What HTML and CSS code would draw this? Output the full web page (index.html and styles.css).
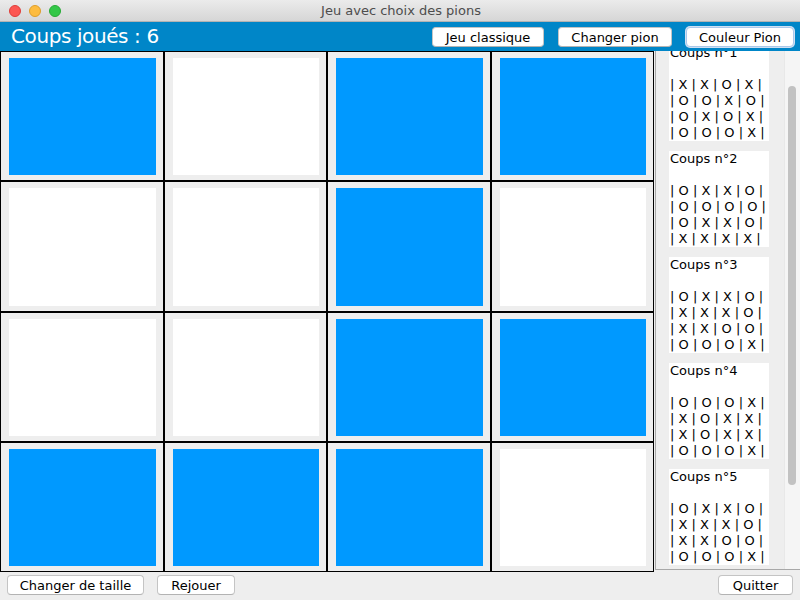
FILE: index.html
```html
<!DOCTYPE html>
<html lang="fr">
<head>
<meta charset="utf-8">
<title>Jeu avec choix des pions</title>
<link rel="stylesheet" href="styles.css">
</head>
<body>
<div class="window">
  <div class="titlebar">
    <div class="lights">
      <span class="light red"></span>
      <span class="light yellow"></span>
      <span class="light green"></span>
    </div>
    <div class="title">Jeu avec choix des pions</div>
  </div>
  <div class="header">
    <div class="score">Coups joués : 6</div>
    <div class="header-buttons">
      <button class="btn btn-classic">Jeu classique</button>
      <button class="btn btn-pion">Changer pion</button>
      <button class="btn btn-color focused">Couleur Pion</button>
    </div>
  </div>
  <div class="main">
    <div class="board">
      <div class="cell"><div class="pawn blue"></div></div>
      <div class="cell"><div class="pawn white"></div></div>
      <div class="cell"><div class="pawn blue"></div></div>
      <div class="cell"><div class="pawn blue"></div></div>
      <div class="cell"><div class="pawn white"></div></div>
      <div class="cell"><div class="pawn white"></div></div>
      <div class="cell"><div class="pawn blue"></div></div>
      <div class="cell"><div class="pawn white"></div></div>
      <div class="cell"><div class="pawn white"></div></div>
      <div class="cell"><div class="pawn white"></div></div>
      <div class="cell"><div class="pawn blue"></div></div>
      <div class="cell"><div class="pawn blue"></div></div>
      <div class="cell"><div class="pawn blue"></div></div>
      <div class="cell"><div class="pawn blue"></div></div>
      <div class="cell"><div class="pawn blue"></div></div>
      <div class="cell"><div class="pawn white"></div></div>
    </div>
    <div class="side">
      <div class="scrollpane">
        <div class="history">
<div class="card">Coups n°1

| X | X | O | X |
| O | O | X | O |
| O | X | O | X |
| O | O | O | X |</div>
<div class="card">Coups n°2

| O | X | X | O |
| O | O | O | O |
| O | X | X | O |
| X | X | X | X |</div>
<div class="card">Coups n°3

| O | X | X | O |
| X | X | X | O |
| X | X | O | O |
| O | O | O | X |</div>
<div class="card">Coups n°4

| O | O | O | X |
| X | O | X | X |
| X | O | X | X |
| O | O | O | X |</div>
<div class="card">Coups n°5

| O | X | X | O |
| X | X | X | O |
| X | X | O | O |
| O | O | O | X |</div>
        </div>
        <div class="scrollbar"><div class="thumb"></div></div>
      </div>
    </div>
  </div>
  <div class="footer">
    <button class="btn btn-size">Changer de taille</button>
    <button class="btn btn-replay">Rejouer</button>
    <div class="spacer"></div>
    <button class="btn btn-quit">Quitter</button>
  </div>
</div>
</body>
</html>
```

FILE: styles.css
```css
* { box-sizing: border-box; }
html, body { margin: 0; padding: 0; }
body {
  font-family: "DejaVu Sans", "Liberation Sans", sans-serif;
  background: #eeeeee;
}
.window {
  width: 800px;
  height: 600px;
  display: flex;
  flex-direction: column;
  overflow: hidden;
  background: #eeeeee;
}
.titlebar {
  height: 22px;
  flex: none;
  background: linear-gradient(#ebebeb, #d6d6d6);
  border-bottom: 1px solid #b3b3b3;
  position: relative;
  display: flex;
  align-items: center;
  justify-content: center;
}
.lights {
  position: absolute;
  left: 9px;
  top: 5px;
  display: flex;
  gap: 8px;
}
.light {
  width: 12px;
  height: 12px;
  border-radius: 50%;
  display: block;
}
.red { background: #fc5753; border: 1px solid #df3d39; }
.yellow { background: #fdbc40; border: 1px solid #de9e2a; }
.green { background: #33c748; border: 1px solid #27aa35; }
.title {
  font-size: 13px;
  color: #4d4d4d;
  padding-left: 2px;
}
.header {
  height: 29px;
  flex: none;
  background: #0086c8;
  display: flex;
  align-items: flex-start;
  justify-content: space-between;
  padding: 0 6px 0 11px;
}
.score {
  color: #ffffff;
  font-size: 20px;
  line-height: 29px;
  letter-spacing: -0.4px;
}
.header-buttons {
  display: flex;
  gap: 14px;
  padding-top: 5px;
}
.btn {
  font-family: "DejaVu Sans", "Liberation Sans", sans-serif;
  font-size: 13px;
  color: #000;
  background: #ffffff;
  border: 1px solid #c4c4c4;
  border-bottom-color: #b3b3b3;
  border-radius: 4px;
  height: 20px;
  padding: 0;
  line-height: 17px;
}
.btn-classic { width: 112px; }
.btn-pion { width: 114px; }
.btn-color { width: 108px; }
.focused { border-color: #a9c8ea; box-shadow: 0 0 0 1px #cfe0f3; }
.main {
  height: 521px;
  flex: none;
  display: flex;
}
.board {
  width: 654px;
  height: 521px;
  flex: none;
  display: grid;
  grid-template-columns: repeat(4, 1fr);
  grid-template-rows: repeat(4, 1fr);
}
.cell {
  border: 1px solid #000;
  background: #eeeeee;
  padding: 6px 7px 5px 8px;
  display: flex;
}
.pawn { flex: 1; }
.pawn.blue { background: #0099ff; }
.pawn.white { background: #ffffff; }
.side {
  flex: 1;
  height: 520px;
  padding-left: 1px;
}
.scrollpane {
  height: 519px;
  border-left: 1px solid #a8a8a8;
  border-bottom: 1px solid #a8a8a8;
  display: flex;
  overflow: hidden;
}
.history {
  flex: 1;
  padding-left: 13px;
  margin-top: -6px;
  display: flex;
  flex-direction: column;
  gap: 10px;
}
.card {
  width: 100px;
  height: 96px;
  flex: none;
  background: #ffffff;
  white-space: pre;
  font-size: 13px;
  line-height: 16px;
  color: #000;
  padding-left: 1px;
  overflow: hidden;
}
.scrollbar {
  width: 16px;
  flex: none;
  background: #f5f5f5;
  border-left: 1px solid #e8e8e8;
  padding: 35px 3px 0 3px;
}
.thumb {
  width: 8px;
  height: 399px;
  border-radius: 4px;
  background: #c2c2c2;
}
.footer {
  flex: 1;
  display: flex;
  align-items: flex-start;
  padding: 3px 7px 0 7px;
  gap: 13px;
}
.spacer { flex: 1; }
.btn-size { width: 137px; }
.btn-replay { width: 78px; }
.btn-quit { width: 75px; }
```
